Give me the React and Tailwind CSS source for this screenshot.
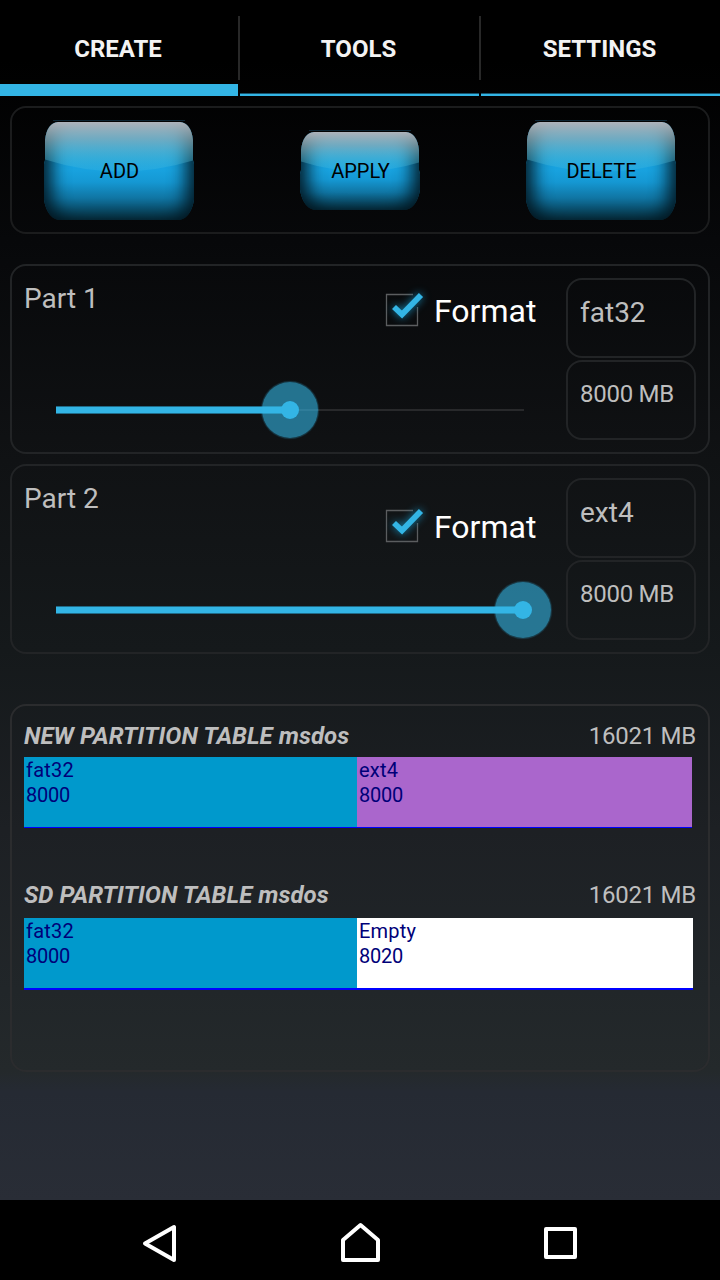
import React from "react";

const tabs = ["CREATE", "TOOLS", "SETTINGS"];

function GlossButton({ id, label, w, h }) {
  return (
    <button
      className={
        "relative flex items-center justify-center pl-px pt-[2px] text-[20px] leading-6 text-black " +
        (w === 150 ? "h-[100px] w-[150px]" : "h-20 w-[120px]")
      }
    >
      <svg className="absolute inset-0" width={w} height={h} viewBox={`0 0 ${w} ${h}`}>
        <defs>
          <linearGradient id={`base-${id}`} x1="0" y1="0" x2="0" y2="1">
            <stop offset="0" stopColor="#149fd8" />
            <stop offset="0.5" stopColor="#18a2df" />
            <stop offset="0.62" stopColor="#1598d3" />
            <stop offset="0.78" stopColor="#1075a3" />
            <stop offset="0.92" stopColor="#094660" />
            <stop offset="1" stopColor="#062c3c" />
          </linearGradient>
          <linearGradient id={`shine-${id}`} x1="0" y1="0" x2="0" y2="1">
            <stop offset="0" stopColor="#b4b6bd" stopOpacity="0.96" />
            <stop offset="0.35" stopColor="#98b0b7" stopOpacity="0.68" />
            <stop offset="0.75" stopColor="#5fbdd2" stopOpacity="0.38" />
            <stop offset="1" stopColor="#45bfe4" stopOpacity="0.22" />
          </linearGradient>
          <clipPath id={`clip-${id}`}>
            <path
              d={`M14 2H${w - 14}Q${w - 3} 3 ${w - 1} 20V40L${w} 44V${h - 20}Q${w - 3} ${h - 3} ${w - 14} ${h}H14Q3 ${h - 3} 0 ${h - 20}V44L1 40V20Q3 3 14 2Z`}
            />
          </clipPath>
          <filter
            id={`soft-${id}`}
            filterUnits="userSpaceOnUse"
            x="-60"
            y="-60"
            width={w + 120}
            height={h + 120}
            colorInterpolationFilters="sRGB"
          >
            <feGaussianBlur stdDeviation="9" />
          </filter>
        </defs>
        <path d={`M9 0.5H${w - 9}`} stroke="#0b2433" />
        <g clipPath={`url(#clip-${id})`}>
          <rect width={w} height={h} fill={`url(#base-${id})`} />
          <path
            d={`M-60 -60H${w + 60}V${h + 60}H-60ZM30 -2H${w - 30}Q${w - 8} -2 ${w - 8} 22V${h - 24}Q${w - 8} ${h + 5} ${w - 34} ${h + 5}H34Q8 ${h + 5} 8 ${h - 24}V22Q8 -2 30 -2Z`}
            fill="#01141d"
            fillRule="evenodd"
            fillOpacity="0.95"
            filter={`url(#soft-${id})`}
          />
          <path
            d={`M1 2H${w - 1}V${h * 0.405}Q${w / 2} ${h * 0.63} 1 ${h * 0.395}Z`}
            fill={`url(#shine-${id})`}
          />
        </g>
      </svg>
      <span className="relative">{label}</span>
    </button>
  );
}

function CheckMark() {
  return (
    <svg width="48" height="48" viewBox="0 0 48 48" className="-ml-2 -mt-2 shrink-0 overflow-visible">
      <path d="M35 8.5H8.5V39.5H39.5V21" fill="none" stroke="#5b5d5f" strokeWidth="1.3" />
      <path
        d="M16 21L24 28.5L43 9"
        fill="none"
        stroke="#33b5e5"
        strokeWidth="5.8"
        className="drop-shadow-[0_0_4px_#1689b4]"
      />
    </svg>
  );
}

function Partition({ name, fs, size, value, low }) {
  return (
    <section className="flex h-[190px] rounded-[16px] border-2 border-[#222426] p-3 text-[#bebebe]">
      <div className="flex w-[542px] flex-col">
        <div className="flex h-[102px] justify-between pt-[3px]">
          <h2 className="pt-px text-[28px] leading-[33px]">{name}</h2>
          <label className={"flex w-[180px] text-white " + (low ? "pt-[29px]" : "pt-[13px]")}>
            <CheckMark />
            <span className="-mt-[2px] ml-2 text-[32px] leading-[38px]">Format</span>
          </label>
        </div>
        <div className="flex h-[60px] items-center pl-8">
          <div className="relative flex h-14 w-[468px] items-center">
            <div className="h-[2px] w-full bg-[#28292b]" />
            <div
              className="absolute left-0 h-[8px] border-y border-[#206b88] bg-[#33b5e5]"
              style={{ width: `${value}%` }}
            />
            <div
              className="absolute flex size-14 -translate-x-1/2 items-center justify-center rounded-full bg-[#33b5e5]/60 shadow-[0_0_1px_1px_#33b5e540]"
              style={{ left: `${value}%` }}
            >
              <span className="size-[18px] rounded-full bg-[#33b5e5]" />
            </div>
          </div>
        </div>
      </div>
      <div className="flex w-[130px] shrink-0 flex-col gap-[2px]">
        <div className="h-20 rounded-[16px] border-2 border-[#222426] px-3 pt-[16px] text-[28px] leading-[33px]">{fs}</div>
        <div className="h-20 rounded-[16px] border-2 border-[#222426] px-3 pt-[18px] text-[24px] leading-[28px] tracking-[-0.27px]">{size}</div>
      </div>
    </section>
  );
}

function Segment({ label, size, className }) {
  return (
    <div className={"h-[70px] pl-[2px] pt-px text-[20px] leading-[25px] text-[#000078] " + className}>
      <p className="tracking-[0.2px]">{label}</p>
      <p className="tracking-[-0.2px]">{size}</p>
    </div>
  );
}

function TableHead({ title }) {
  return (
    <div className="flex justify-between text-[24px] leading-[28px]">
      <h3 className="font-bold italic tracking-[0.04px]">{title}</h3>
      <span className="tracking-[-0.27px]">16021 MB</span>
    </div>
  );
}

export default function App() {
  return (
    <div className="flex h-[1280px] w-[720px] flex-col overflow-hidden bg-black font-[Roboto,sans-serif]">
      <div className="flex h-[1200px] flex-col bg-[linear-gradient(to_bottom,#000_0px,#000_60px,#07080a_240px,#101214_460px,#15191b_650px,#1d2024_830px,#212629_990px,#24292b_1070px,#252a33_1092px,#292d36_1200px)]">
        <nav className="flex h-24 text-[24px] font-bold text-[#f3f3f3]">
          {tabs.map((t, i) => (
            <React.Fragment key={t}>
              {i > 0 && <div className="mt-4 h-16 w-[2px] bg-[#282828]" />}
              <button
                className={
                  "flex items-center justify-center pr-[2px] " +
                  (i === 0
                    ? "w-[238px] border-b-[12px] border-[#33b5e5] pt-[13px]"
                    : "flex-1 border-b-2 border-[#33b5e5] pt-[3px] shadow-[inset_0_-1px_0_#17526a]")
                }
              >
                {t}
              </button>
            </React.Fragment>
          ))}
        </nav>
        <main className="px-[10px] pt-[10px]">
          <section className="flex h-32 items-center justify-between rounded-[16px] border-2 border-[#1b1c1d] px-8">
            <GlossButton id="add" label="ADD" w={150} h={100} />
            <GlossButton id="apply" label="APPLY" w={120} h={80} />
            <GlossButton id="delete" label="DELETE" w={150} h={100} />
          </section>
          <div className="mt-[30px] flex flex-col gap-[10px]">
            <Partition name="Part 1" fs="fat32" size="8000 MB" value={50} />
            <Partition name="Part 2" fs="ext4" size="8000 MB" value={99.8} low />
          </div>
          <section className="mt-[50px] h-[368px] rounded-[16px] border-2 border-[#2b2c2e] px-3 pt-4 text-[#bebebe]">
            <TableHead title="NEW PARTITION TABLE msdos" />
            <div className="mt-[7px] flex w-[668px] border-b border-[#0000ff]">
              <Segment label="fat32" size="8000" className="w-[333px] bg-[#0099cc]" />
              <Segment label="ext4" size="8000" className="w-[335px] bg-[#aa66cc]" />
            </div>
            <div className="mt-[53px]">
              <TableHead title="SD PARTITION TABLE msdos" />
            </div>
            <div className="mt-[9px] flex w-[669px] border-b-2 border-[#0000ff]">
              <Segment label="fat32" size="8000" className="w-[333px] bg-[#0099cc]" />
              <Segment label="Empty" size="8020" className="w-[336px] bg-white" />
            </div>
          </section>
        </main>
      </div>
      <footer className="flex h-20 bg-black px-[60px]">
        <svg width="600" height="80" viewBox="0 0 600 80" fill="none" stroke="white" strokeWidth="4" strokeLinejoin="round">
          <path d="M114 27V60L85 43.5Z" />
          <path d="M283 40L300.5 25L318 40V60H283Z" />
          <path d="M486 29H515V57H486Z" />
        </svg>
      </footer>
    </div>
  );
}
